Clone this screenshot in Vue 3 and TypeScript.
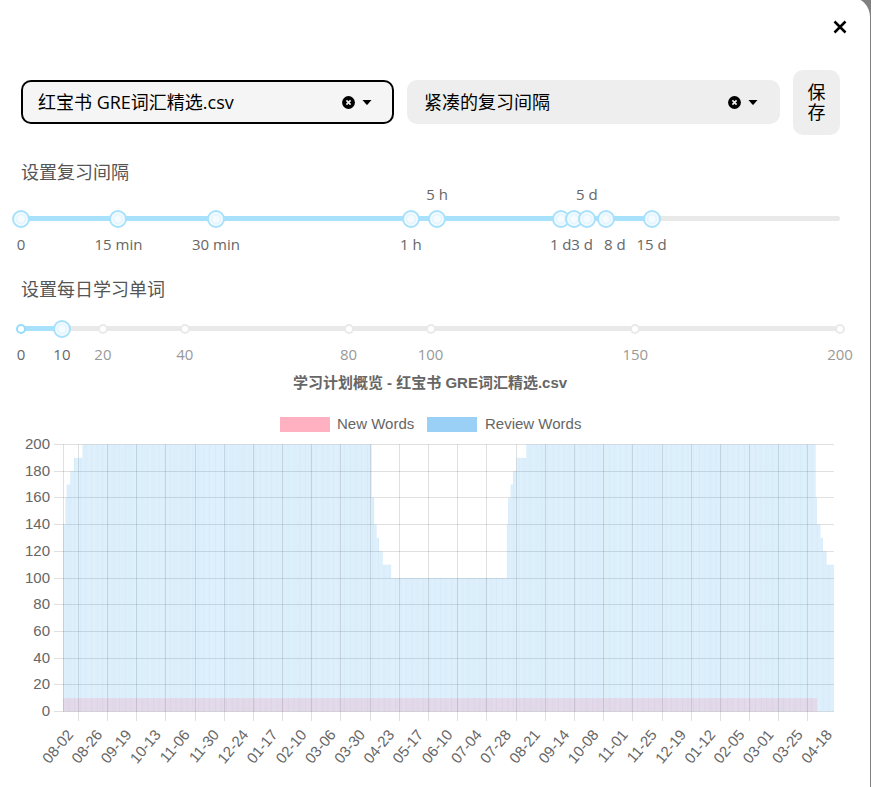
<script setup lang="ts">
import { computed, ref } from 'vue'

interface Mark {
  at: number
  label: string
  labelAt?: number
  above?: boolean
}

const book = ref('红宝书 GRE词汇精选.csv')
const preset = ref('紧凑的复习间隔')

const intervals = ref<Mark[]>([
  { at: 0, label: '0' },
  { at: 11.9, label: '15 min' },
  { at: 23.8, label: '30 min' },
  { at: 47.6, label: '1 h' },
  { at: 50.8, label: '5 h', above: true },
  { at: 65.9, label: '1 d' },
  { at: 67.5, label: '3 d', labelAt: 68.5 },
  { at: 69.1, label: '5 d', above: true },
  { at: 71.4, label: '8 d', labelAt: 72.5 },
  { at: 77, label: '15 d' },
])
const lastInterval = computed(() => Math.max(...intervals.value.map((m) => Number(m.at))))

const daily = ref(10)
const dailyMax = 200
const dailyMarks = [0, 10, 20, 40, 80, 100, 150, 200]

/* Chart geometry, in viewBox units */
const left = 42
const right = 813
const top = 76.5
const bottom = 343.5
const days = 634
const pitch = (right - left) / days
const yOf = (v: number) => bottom - (v / 200) * (bottom - top)

/* Review load per day, as [first day, words] */
const steps: [number, number][] = [
  [0, 140], [2, 160], [3, 170], [6, 180], [9, 190], [16, 200],
  [254, 160], [256, 140], [258, 130], [260, 120], [263, 110], [270, 100],
  [365, 140], [366, 160], [368, 170], [370, 180], [373, 190], [381, 200],
  [619, 160], [620, 140], [623, 130], [625, 120], [628, 110],
]
const bars = Array.from({ length: days }, (_, day) => {
  let words = 0
  for (const [from, value] of steps) if (day >= from) words = value
  return { x: left + day * pitch, y: yOf(words), h: bottom - yOf(words), isNew: day < 620 }
})
const newTop = yOf(10)

const yTicks = Array.from({ length: 11 }, (_, i) => {
  const value = i * 20
  return { value, y: Math.floor(yOf(value)) + 0.5 }
})
const dates = [
  '08-02', '08-26', '09-19', '10-13', '11-06', '11-30', '12-24', '01-17', '02-10',
  '03-06', '03-30', '04-23', '05-17', '06-10', '07-04', '07-28', '08-21', '09-14',
  '10-08', '11-01', '11-25', '12-19', '01-12', '02-05', '03-01', '03-25', '04-18',
]
const xTicks = dates.map((label, i) => ({
  label,
  line: Math.floor(57.3 + i * 24 * pitch) + 0.5,
  x: 53 + i * 24 * pitch,
}))
</script>

<template>
  <div class="backdrop">
    <main class="panel">
      <header class="head">
        <button class="close" type="button" aria-label="关闭">
          <svg width="14" height="14" viewBox="0 0 14 14"><path d="M1.5 1.5l11 11M12.5 1.5l-11 11" /></svg>
        </button>
      </header>

      <form class="controls" @submit.prevent>
        <div class="picker picker-active">
          <select v-model="book" aria-label="单词书">
            <option>红宝书 GRE词汇精选.csv</option>
            <option value=""></option>
          </select>
          <button class="clear" type="button" aria-label="清除" @click="book = ''">
            <svg width="13" height="13" viewBox="0 0 13 13">
              <circle cx="6.5" cy="6.5" r="6.4" /><path d="M4.4 4.4l4.2 4.2M8.6 4.4l-4.2 4.2" />
            </svg>
          </button>
          <svg class="caret" width="10" height="5" viewBox="0 0 10 5"><path d="M0.5 0h9L5.6 4.4q-.6.6-1.2 0z" /></svg>
        </div>
        <div class="picker">
          <select v-model="preset" aria-label="间隔方案">
            <option>紧凑的复习间隔</option>
            <option value=""></option>
          </select>
          <button class="clear" type="button" aria-label="清除" @click="preset = ''">
            <svg width="13" height="13" viewBox="0 0 13 13">
              <circle cx="6.5" cy="6.5" r="6.4" /><path d="M4.4 4.4l4.2 4.2M8.6 4.4l-4.2 4.2" />
            </svg>
          </button>
          <svg class="caret" width="10" height="5" viewBox="0 0 10 5"><path d="M0.5 0h9L5.6 4.4q-.6.6-1.2 0z" /></svg>
        </div>
        <button class="save" type="submit">保存</button>
      </form>

      <section class="interval">
        <h2>设置复习间隔</h2>
        <div class="marks">
          <template v-for="m in intervals" :key="m.label">
            <span v-if="m.above" class="mark" :style="{ left: m.at + '%' }">{{ m.label }}</span>
          </template>
        </div>
        <div class="slider">
          <div class="rail"><div class="fill" :style="{ width: lastInterval + '%' }"></div></div>
          <input
            v-for="m in intervals"
            :key="m.label"
            v-model.number="m.at"
            type="range"
            min="0"
            max="100"
            step="0.1"
            :aria-label="m.label"
          />
        </div>
        <div class="marks marks-below">
          <template v-for="m in intervals" :key="m.label">
            <span v-if="!m.above" class="mark" :style="{ left: (m.labelAt ?? m.at) + '%' }">{{ m.label }}</span>
          </template>
        </div>
      </section>

      <section class="daily">
        <h2><label for="daily">设置每日学习单词</label></h2>
        <div class="slider">
          <div class="rail"><div class="fill" :style="{ width: (daily / dailyMax) * 100 + '%' }"></div></div>
          <span
            v-for="m in dailyMarks"
            :key="m"
            class="dot"
            :class="{ on: m <= daily }"
            :style="{ left: (m / dailyMax) * 100 + '%' }"
          ></span>
          <input id="daily" v-model.number="daily" type="range" min="0" :max="dailyMax" />
        </div>
        <div class="marks marks-below">
          <span
            v-for="m in dailyMarks"
            :key="m"
            class="mark"
            :class="{ off: m > daily }"
            :style="{ left: (m / dailyMax) * 100 + '%' }"
          >{{ m }}</span>
        </div>
      </section>

      <svg class="chart" viewBox="0 0 819 409" role="img" aria-label="学习计划概览">
        <text class="title" x="409" y="20" text-anchor="middle">学习计划概览 - 红宝书 GRE词汇精选.csv</text>
        <rect class="key-new" x="259" y="49" width="50" height="15" />
        <text x="316" y="61">New Words</text>
        <rect class="key-review" x="406" y="49" width="50" height="15" />
        <text x="464" y="61">Review Words</text>

        <g class="grid">
          <line v-for="t in yTicks" :key="t.value" x1="33" :x2="right" :y1="t.y" :y2="t.y" />
          <line x1="42.5" x2="42.5" :y1="top" :y2="bottom" />
          <line v-for="t in xTicks.slice(0, 26)" :key="t.line" :x1="t.line" :x2="t.line" :y1="top" y2="353" />
        </g>
        <g class="review">
          <rect v-for="b in bars" :key="b.x" :x="b.x" :y="b.y" width="1.06" :height="b.h" />
        </g>
        <g class="new">
          <rect v-for="b in bars.filter((d) => d.isNew)" :key="b.x" :x="b.x" :y="newTop" width="1.06" :height="bottom - newTop" />
        </g>
        <text v-for="t in yTicks" :key="t.value" x="29" :y="Math.floor(t.y) + 5" text-anchor="end">{{ t.value }}</text>
        <text
          v-for="t in xTicks"
          :key="t.label + t.x"
          text-anchor="end"
          :transform="`translate(${t.x} 367) rotate(-50)`"
        >{{ t.label }}</text>
      </svg>
    </main>
  </div>
</template>

<style>
body {
  margin: 0;
  background: #808080;
}
</style>

<style scoped>
.backdrop {
  display: flow-root;
  min-height: 100vh;
  overflow: hidden;
  background: #808080;
  font-family: "Open Sans", "Noto Sans CJK SC", sans-serif;
}
.panel {
  box-sizing: border-box;
  min-height: calc(100vh + 3px);
  margin: -3px 1px 0 0;
  padding: 3px 30px 10px 21px;
  border-top-right-radius: 20px;
  background: #fff;
}
.head {
  display: flex;
  align-items: center;
  justify-content: flex-end;
  height: 54px;
}
button {
  padding: 0;
  border: 0;
  background: none;
  color: #000;
  font: inherit;
  cursor: pointer;
}
.close {
  display: flex;
  margin-right: -7px;
}
.close path {
  fill: none;
  stroke: #000;
  stroke-width: 2.5;
}
.controls {
  display: flex;
  align-items: flex-start;
  gap: 13px;
  margin-top: 16px;
}
.picker {
  box-sizing: border-box;
  display: flex;
  flex: 1;
  align-items: center;
  min-width: 0;
  height: 44px;
  margin-top: 10px;
  padding-right: 20px;
  border: 2px solid #eee;
  border-radius: 10px;
  background: #eee;
}
.picker-active {
  border-color: #000;
  background: #f5f5f5;
}
.picker select {
  flex: 1;
  min-width: 0;
  height: 40px;
  padding: 0 0 0 15px;
  border: 0;
  outline: 0;
  background: transparent;
  appearance: none;
  color: #000;
  font: 400 18px "Open Sans", "Noto Sans CJK SC", sans-serif;
}
.clear {
  display: flex;
}
.clear path {
  stroke: #eee;
  stroke-width: 1.7;
}
.caret {
  margin-left: 7px;
}
.save {
  box-sizing: border-box;
  width: 47px;
  height: 65px;
  padding: 0 14px 2px;
  border-radius: 10px;
  background: #eee;
  font-size: 18px;
  line-height: 20px;
}
h2 {
  margin: 0;
  color: #555;
  font-size: 18px;
  font-weight: 400;
  line-height: 24px;
}
.interval {
  margin-top: 25px;
}
.daily {
  margin-top: 23px;
}
.daily .slider {
  margin-top: 13px;
}
.slider {
  position: relative;
  display: flex;
  align-items: center;
  height: 29px;
}
.rail {
  flex: 1;
  height: 5px;
  border-radius: 3px;
  background: #e9e9e9;
}
.fill {
  height: 5px;
  border-radius: 3px;
  background: #a8e1fb;
}
.dot {
  position: absolute;
  box-sizing: border-box;
  width: 10px;
  height: 10px;
  border: 2px solid #e9e9e9;
  border-radius: 50%;
  background: #fff;
  transform: translateX(-50%);
}
.dot.on {
  border-color: #96dcfb;
}
.slider input {
  position: absolute;
  left: -9px;
  width: calc(100% + 18px);
  height: 18px;
  margin: 0;
  background: transparent;
  appearance: none;
  pointer-events: none;
}
.slider input::-webkit-slider-thumb {
  box-sizing: border-box;
  width: 18px;
  height: 18px;
  border: 2px solid #a8e1fb;
  border-radius: 50%;
  background: radial-gradient(circle, #f5fbff 3px, #e6f6fe 4px, #e6f6fe 5px, #f5fbff 6px);
  appearance: none;
  cursor: grab;
  pointer-events: auto;
}
.marks {
  position: relative;
  height: 20px;
  color: #666;
  font-size: 15px;
  line-height: 20px;
}
.marks-below {
  margin-top: 1px;
}
.mark {
  position: absolute;
  white-space: nowrap;
  transform: translateX(-50%);
}
.off {
  color: #999;
}
.chart {
  display: block;
  width: 100%;
  margin-top: 4px;
  overflow: visible;
}
.chart text {
  fill: #666;
  font-family: "Liberation Sans", "Noto Sans CJK SC", sans-serif;
  font-size: 15px;
}
.chart .title {
  font-weight: 700;
}
.grid {
  stroke: rgba(0, 0, 0, 0.12);
}
.review {
  fill: rgba(54, 162, 235, 0.2);
}
.new {
  fill: rgba(255, 99, 132, 0.18);
}
.key-new {
  fill: #ffb1c1;
}
.key-review {
  fill: #9ad0f5;
}
</style>
